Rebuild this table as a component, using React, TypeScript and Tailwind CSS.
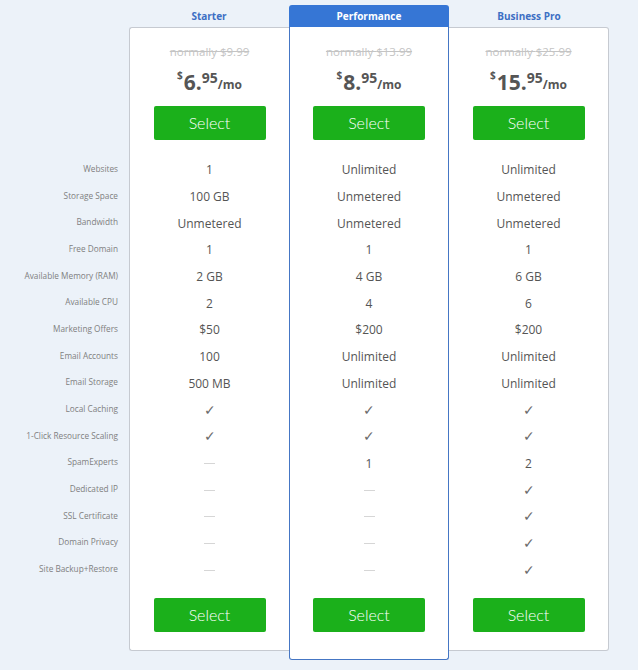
import React from "react";

const labels = [
  "Websites",
  "Storage Space",
  "Bandwidth",
  "Free Domain",
  "Available Memory (RAM)",
  "Available CPU",
  "Marketing Offers",
  "Email Accounts",
  "Email Storage",
  "Local Caching",
  "1-Click Resource Scaling",
  "SpamExperts",
  "Dedicated IP",
  "SSL Certificate",
  "Domain Privacy",
  "Site Backup+Restore",
];

const Y = "check";
const N = "dash";

const plans = [
  {
    name: "Starter",
    was: "$9.99",
    whole: "6",
    cents: "95",
    values: ["1", "100 GB", "Unmetered", "1", "2 GB", "2", "$50", "100", "500 MB", Y, Y, N, N, N, N, N],
  },
  {
    name: "Performance",
    was: "$13.99",
    whole: "8",
    cents: "95",
    values: ["Unlimited", "Unmetered", "Unmetered", "1", "4 GB", "4", "$200", "Unlimited", "Unlimited", Y, Y, "1", N, N, N, N],
  },
  {
    name: "Business Pro",
    was: "$25.99",
    whole: "15",
    cents: "95",
    values: ["Unlimited", "Unmetered", "Unmetered", "1", "6 GB", "6", "$200", "Unlimited", "Unlimited", Y, Y, "2", Y, Y, Y, Y],
  },
];

function Cell({ v }: { v: string }) {
  if (v === Y) return <span className="text-[14px] text-[#6a6a6a] font-['DejaVu_Sans',sans-serif] font-light">✓</span>;
  if (v === N) return <span className="block w-[11px] h-px bg-[#d6d6d6]" />;
  return <span className="text-[12px] text-[#555]">{v}</span>;
}

function SelectButton() {
  return (
    <button className="w-[112px] h-[34px] bg-[#1bb01b] text-white text-[16px] font-light rounded-[2px] font-['Lato',sans-serif]">
      Select
    </button>
  );
}

function PlanBody({ plan, top, bottom }: { plan: (typeof plans)[number]; top: string; bottom: string }) {
  return (
    <div className={`flex flex-col items-center ${top} ${bottom}`}>
      <div className="text-[11.5px] leading-[16px] text-[#c4c4c4] line-through">normally {plan.was}</div>
      <div className="mt-[6px] h-[28px] flex items-end text-[#555] font-bold">
        <span className="text-[10px] leading-[12px] self-start mt-[3px] mr-[1px]">$</span>
        <span className="text-[21px] leading-[24px]">{plan.whole}.</span>
        <span className="text-[14px] leading-[14px] mb-[9px]">{plan.cents}</span>
        <span className="text-[12px] leading-[18px]">/mo</span>
      </div>
      <div className="mt-[12px]">
        <SelectButton />
      </div>
      <div className="mt-[17px] w-full">
        {plan.values.map((v, i) => (
          <div key={i} className="h-[26.67px] flex items-center justify-center">
            <Cell v={v} />
          </div>
        ))}
      </div>
      <div className="mt-[14px]">
        <SelectButton />
      </div>
    </div>
  );
}

export default function App() {
  const [starter, perf, biz] = plans;
  return (
    <div className="w-[638px] h-[670px] bg-[#ecf2f9] font-['Open_Sans',sans-serif] flex">
      <div className="w-[129px] pt-[156px] pr-[11px] flex flex-col items-end">
        {labels.map((l) => (
          <div key={l} className="h-[26.67px] flex items-center text-[8.25px] text-[#808080]">
            {l}
          </div>
        ))}
      </div>

      <div className="w-[160px] pt-[5px]">
        <div className="h-[22px] flex items-center justify-center text-[10px] font-bold text-[#3d6fc4]">
          {starter.name}
        </div>
        <div className="bg-white border-t border-l border-b border-[#c6cad1] rounded-l-[3px]">
          <PlanBody plan={starter} top="pt-[16px]" bottom="pb-[18px]" />
        </div>
      </div>

      <div className="w-[160px] pt-[5px]">
        <div className="h-[22px] flex items-center justify-center text-[10px] font-bold text-white bg-[#3676d5] rounded-t-[3px]">
          {perf.name}
        </div>
        <div className="bg-white border-l border-r border-b border-[#4576c4] rounded-b-[3px]">
          <PlanBody plan={perf} top="pt-[17px]" bottom="pb-[27px]" />
        </div>
      </div>

      <div className="w-[160px] pt-[5px]">
        <div className="h-[22px] flex items-center justify-center text-[10px] font-bold text-[#3d6fc4]">
          {biz.name}
        </div>
        <div className="bg-white border-t border-r border-b border-[#c6cad1] rounded-r-[3px]">
          <PlanBody plan={biz} top="pt-[16px]" bottom="pb-[18px]" />
        </div>
      </div>
    </div>
  );
}
